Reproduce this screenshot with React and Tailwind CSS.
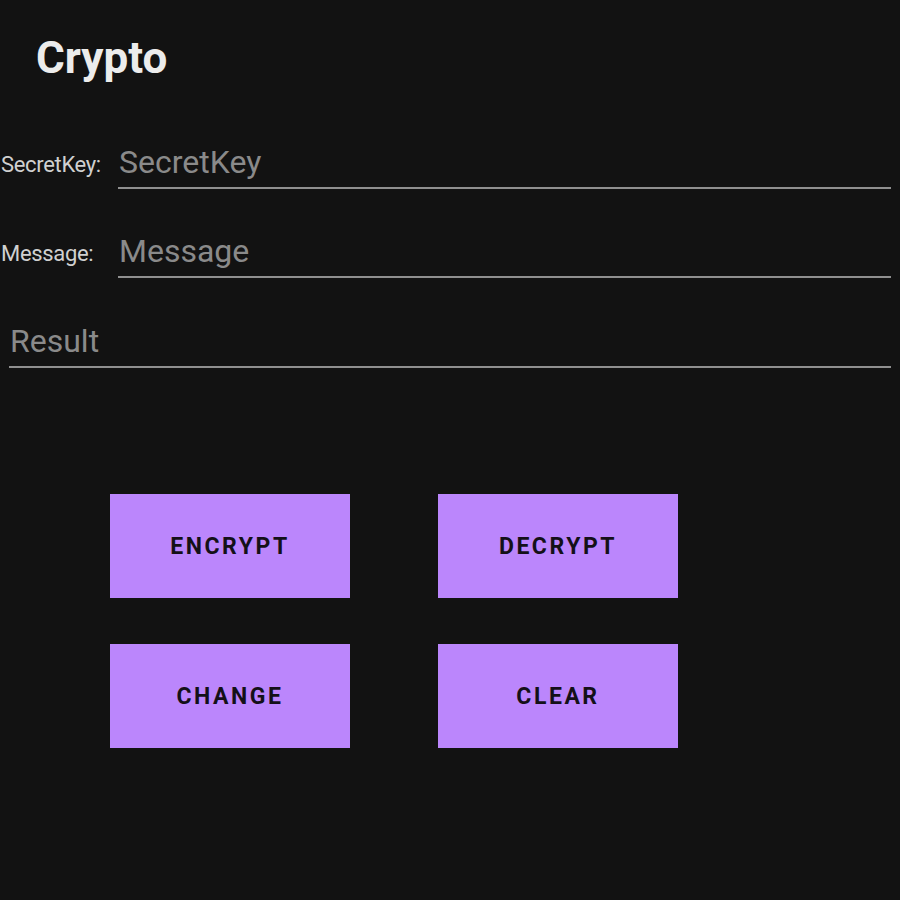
import React from 'react';

const btnCls = 'w-[240px] h-[104px] pt-[3px] bg-[#bb86fc] text-[#141018] text-[23px] font-bold tracking-[0.11em] flex items-center justify-center';

function Field({ label, placeholder }) {
  return (
    <div className="flex items-end h-[89.5px]">
      {label && <div className="w-[118px] pl-[1px] pb-[8px] text-[22px] tracking-[-0.015em] text-[#d0d0d0]">{label}</div>}
      <div className={`flex-1 border-b-2 border-[#8f8f8f] pb-[6px] ${label ? '' : 'ml-[9px]'}`}>
        <input placeholder={placeholder} className="w-full bg-transparent outline-none text-[32px] leading-[38px] pl-[1px] placeholder:text-[#8a8a8a] text-[#e0e0e0]" />
      </div>
    </div>
  );
}

export default function App() {
  return (
    <div className="w-[900px] h-[900px] bg-[#121212] font-['Roboto',sans-serif] pr-[9px]">
      <div className="pt-[30px] pl-[36px] text-[44px] font-bold text-[#ececec] leading-[56px]">Crypto</div>
      <div className="mt-[13px]">
        <Field label="SecretKey:" placeholder="SecretKey" />
        <Field label="Message:" placeholder="Message" />
        <Field placeholder="Result" />
      </div>
      <div className="pl-[110px] pt-[126px] grid grid-cols-[240px_240px] gap-x-[88px] gap-y-[46px]">
        <button className={btnCls}>ENCRYPT</button>
        <button className={btnCls}>DECRYPT</button>
        <button className={btnCls}>CHANGE</button>
        <button className={btnCls}>CLEAR</button>
      </div>
    </div>
  );
}
